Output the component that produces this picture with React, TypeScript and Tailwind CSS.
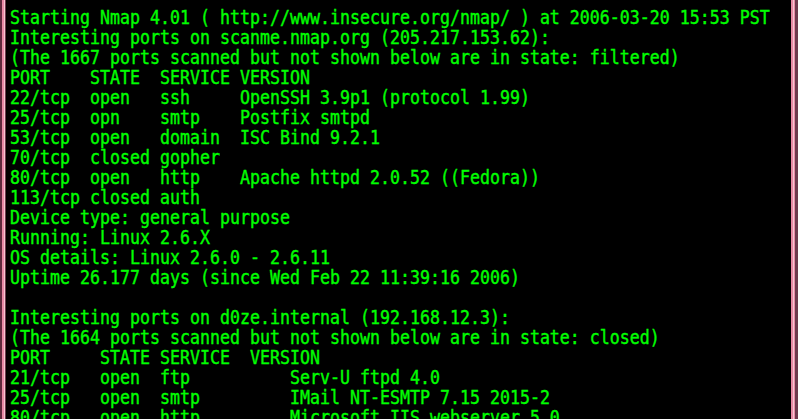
import React from "react";

const lines: string[] = [
  "Starting Nmap 4.01 ( http://www.insecure.org/nmap/ ) at 2006-03-20 15:53 PST",
  "Interesting ports on scanme.nmap.org (205.217.153.62):",
  "(The 1667 ports scanned but not shown below are in state: filtered)",
  "PORT    STATE  SERVICE VERSION",
  "22/tcp  open   ssh     OpenSSH 3.9p1 (protocol 1.99)",
  "25/tcp  opn    smtp    Postfix smtpd",
  "53/tcp  open   domain  ISC Bind 9.2.1",
  "70/tcp  closed gopher",
  "80/tcp  open   http    Apache httpd 2.0.52 ((Fedora))",
  "113/tcp closed auth",
  "Device type: general purpose",
  "Running: Linux 2.6.X",
  "OS details: Linux 2.6.0 - 2.6.11",
  "Uptime 26.177 days (since Wed Feb 22 11:39:16 2006)",
  " ",
  "Interesting ports on d0ze.internal (192.168.12.3):",
  "(The 1664 ports scanned but not shown below are in state: closed)",
  "PORT     STATE SERVICE  VERSION",
  "21/tcp   open  ftp          Serv-U ftpd 4.0",
  "25/tcp   open  smtp         IMail NT-ESMTP 7.15 2015-2",
  "80/tcp   open  http         Microsoft IIS webserver 5.0",
];

export default function App() {
  return (
    <div className="w-[798px] h-[419px] flex overflow-hidden bg-black">
      <div className="flex h-full shrink-0">
        <div className="w-[2px] bg-[#5e2b3d]" />
        <div className="w-[2px] bg-[#e88aa6]" />
        <div className="w-[1px] bg-[#f7c6d3]" />
        <div className="w-[1px] bg-[#6e3a4e]" />
      </div>
      <div className="flex-1 min-w-0 overflow-hidden pl-[4px] pt-[7px]">
        <div className="origin-top-left scale-x-[0.874] w-[900px] text-[19px] leading-[20px] text-[#00ff00] [-webkit-text-stroke:0.4px_#00ff00] font-['DejaVu_Sans_Mono',monospace]">
          {lines.map((l, i) => (
            <div key={i} className="whitespace-pre h-[20px]">
              {l}
            </div>
          ))}
        </div>
      </div>
      <div className="flex h-full shrink-0">
        <div className="w-[2px] bg-[#e88aa6]" />
        <div className="w-[1px] bg-[#f7c6d3]" />
        <div className="w-[1px] bg-[#e88aa6]" />
        <div className="w-[3px] bg-[#6e3a4e]" />
      </div>
    </div>
  );
}
